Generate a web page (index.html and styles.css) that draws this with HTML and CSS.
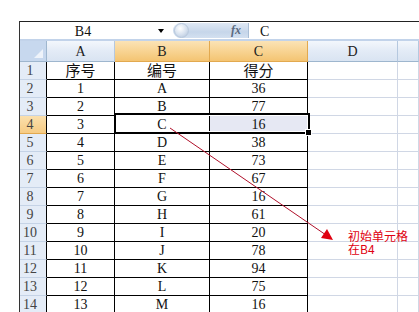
FILE: index.html
```html
<!DOCTYPE html>
<html>

<head>
    <title>Sheet1</title>
    <link rel="stylesheet" href="styles.css">
</head>

<body>
    <div class="top"></div>
    <div class="frame">
        <div class="fbar">
            <div class="namebox"><span class="ref">B4</span><span class="drop"></span></div>
            <div class="fxbtn"><span class="knob"></span><i class="fx">fx</i></div>
            <div class="formula">C</div>
        </div>
        <div class="band"></div>
        <div class="sheet">
            <div class="corner"></div>
            <div class="colhd">A</div>
            <div class="colhd on">B</div>
            <div class="colhd on">C</div>
            <div class="colhd plain">D</div>
            <div class="colhd plain"></div>

            <div class="rowhd">1</div><div class="cell"><span class="cjk">序号</span></div><div class="cell"><span class="cjk">编号</span></div><div class="cell"><span class="cjk">得分</span></div><div class="grid"></div><div class="grid"></div>
            <div class="rowhd">2</div><div class="cell">1</div><div class="cell">A</div><div class="cell">36</div><div class="grid"></div><div class="grid"></div>
            <div class="rowhd">3</div><div class="cell">2</div><div class="cell">B</div><div class="cell">77</div><div class="grid"></div><div class="grid"></div>
            <div class="rowhd on">4</div><div class="cell">3</div><div class="cell">C</div><div class="cell picked">16</div><div class="grid"></div><div class="grid"></div>
            <div class="rowhd">5</div><div class="cell">4</div><div class="cell">D</div><div class="cell">38</div><div class="grid"></div><div class="grid"></div>
            <div class="rowhd">6</div><div class="cell">5</div><div class="cell">E</div><div class="cell">73</div><div class="grid"></div><div class="grid"></div>
            <div class="rowhd">7</div><div class="cell">6</div><div class="cell">F</div><div class="cell">67</div><div class="grid"></div><div class="grid"></div>
            <div class="rowhd">8</div><div class="cell">7</div><div class="cell">G</div><div class="cell">16</div><div class="grid"></div><div class="grid"></div>
            <div class="rowhd">9</div><div class="cell">8</div><div class="cell">H</div><div class="cell">61</div><div class="grid"></div><div class="grid"></div>
            <div class="rowhd">10</div><div class="cell">9</div><div class="cell">I</div><div class="cell">20</div><div class="grid"></div><div class="grid"></div>
            <div class="rowhd">11</div><div class="cell">10</div><div class="cell">J</div><div class="cell">78</div><div class="grid"></div><div class="grid"></div>
            <div class="rowhd">12</div><div class="cell">11</div><div class="cell">K</div><div class="cell">94</div><div class="grid"></div><div class="grid"></div>
            <div class="rowhd">13</div><div class="cell">12</div><div class="cell">L</div><div class="cell">75</div><div class="grid"></div><div class="grid"></div>
            <div class="rowhd">14</div><div class="cell">13</div><div class="cell">M</div><div class="cell">16</div><div class="grid"></div><div class="grid"></div>

            <div class="sel"><div class="handle"></div></div>
        </div>
    </div>

    <svg class="arrow" width="419" height="312" viewBox="0 0 419 312">
        <line x1="170" y1="128" x2="326" y2="235" stroke="#b0102a" stroke-width="1"/>
        <polygon points="333,240 321,238 327,229" fill="#e00010"/>
    </svg>
    <div class="note">
        <div>初始单元格</div>
        <div>在B4</div>
    </div>
</body>

</html>
```

FILE: styles.css
```css
body {
    margin: 0;
    width: 419px;
    height: 312px;
    overflow: hidden;
    background: #fff;
    font-family: "Liberation Serif", "Noto Sans CJK SC", serif;
    font-size: 14px;
    color: #111;
    position: relative;
}

.top {
    height: 21px;
}

.frame {
    margin-left: 19px;
    border-left: 1px solid #333;
}

.fbar {
    display: flex;
    height: 17px;
    border-top: 1px solid #222;
    background: #fff;
}

.namebox {
    width: 153px;
    display: flex;
    align-items: center;
}

.ref {
    width: 126px;
    text-align: center;
    line-height: 17px;
    padding-top: 1px;
}

.drop {
    width: 0;
    height: 0;
    margin-left: 12px;
    margin-top: 1px;
    border-left: 3px solid transparent;
    border-right: 3px solid transparent;
    border-top: 4px solid #000;
}

.fxbtn {
    width: 75px;
    margin-top: 1px;
    height: 15px;
    border-radius: 8px 0 0 8px;
    background: linear-gradient(#dfe8f4, #c6d6ea 60%, #d3e0f0);
    border-right: 1px solid #a9bed6;
    display: flex;
    align-items: center;
    justify-content: space-between;
}

.knob {
    width: 13px;
    height: 13px;
    margin-left: 1px;
    border-radius: 50%;
    background: radial-gradient(circle at 40% 35%, #ffffff, #d5e0ee 55%, #aebfd6);
    border: 1px solid #b9c9dd;
}

.fx {
    font-family: "Liberation Serif", serif;
    font-size: 12px;
    color: #5a6a80;
    margin-right: 7px;
    font-weight: bold;
}

.formula {
    padding-left: 11px;
    line-height: 17px;
    padding-top: 1px;
}

.band {
    height: 2px;
    background: #c2d3ea;
}

.sheet {
    position: relative;
    display: grid;
    grid-template-columns: 27px 68px 95px 98px 90px 1fr;
    grid-template-rows: 21px repeat(14, 18px);
}

.sheet > div {
    box-sizing: border-box;
}

.corner {
    background: #c7d8ee;
    border-right: 1px solid #9eb6ce;
    border-bottom: 1px solid #9eb6ce;
    position: relative;
}

.corner::after {
    content: "";
    position: absolute;
    right: 3px;
    bottom: 3px;
    border-left: 9px solid transparent;
    border-bottom: 9px solid #eef3fa;
}

.colhd {
    background: linear-gradient(#f3f7fc, #e3ebf6 50%, #d9e4f2);
    border-right: 1px solid #b5c8df;
    border-bottom: 1px solid #9eb6ce;
    text-align: center;
    line-height: 17px;
    padding-top: 2px;
    color: #222;
}

.colhd.on {
    background: linear-gradient(#fbe3b6, #f8d493 50%, #f4c472);
    border-right-color: #e2a94f;
    border-bottom-color: #e2a94f;
}

.rowhd {
    background: #e4ecf7;
    border-right: 1px solid #000;
    border-bottom: 1px solid #c5d3e6;
    text-align: center;
    padding-right: 6px;
    line-height: 17px;
    color: #444;
}

.rowhd.on {
    background: linear-gradient(#fbe0ad, #f6cb83);
    border-bottom-color: #e2a94f;
}

.cell {
    border-right: 1px solid #000;
    border-bottom: 1px solid #000;
    text-align: center;
    line-height: 17px;
    white-space: nowrap;
}

.cjk {
    font-family: "Noto Sans CJK SC", sans-serif;
    font-size: 15px;
    line-height: 15px;
}

.cell.picked {
    background: #e6e8f3;
}

.grid {
    border-right: 1px solid #d0d7e5;
    border-bottom: 1px solid #d0d7e5;
}

.sel {
    position: absolute;
    left: 94px;
    top: 72px;
    width: 196px;
    height: 21px;
    box-sizing: border-box;
    border: 2px solid #000;
    box-shadow: inset 0 0 0 1px #fff;
}

.handle {
    position: absolute;
    right: -4px;
    bottom: -4px;
    width: 5px;
    height: 5px;
    background: #000;
    border: 1px solid #fff;
}

.arrow {
    position: absolute;
    left: 0;
    top: 0;
}

.note {
    position: absolute;
    left: 348px;
    top: 229px;
    font-family: "Noto Sans CJK SC", sans-serif;
    font-size: 12px;
    line-height: 13px;
    color: #e00010;
}
```
